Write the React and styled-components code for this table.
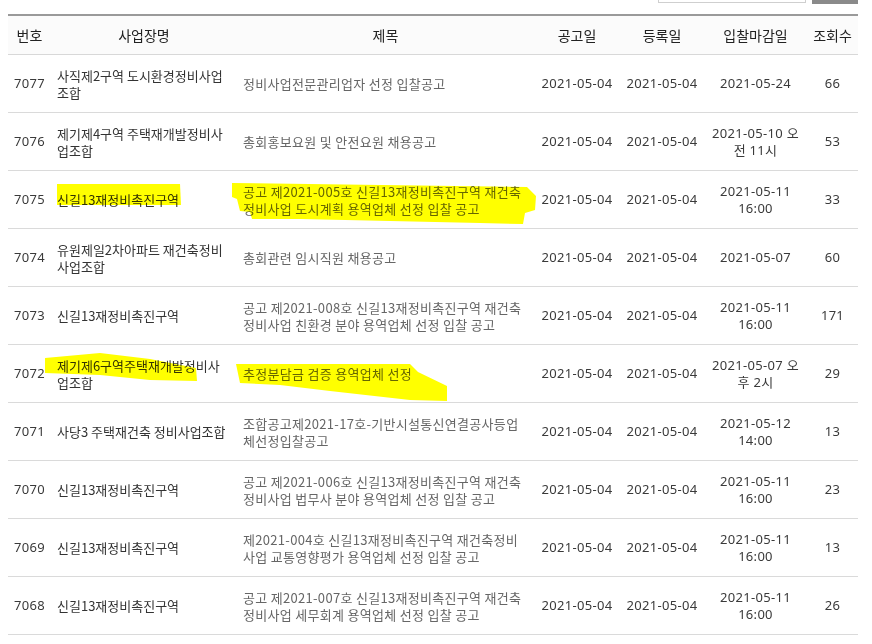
import React from 'react'
import styled, { createGlobalStyle } from 'styled-components'

const GlobalStyle = createGlobalStyle`
    body {
        margin: 0;
        background: #fff;
        font-family: "Noto Sans CJK KR", "Noto Sans", sans-serif;
    }
`

const COLS = '43px 186px 297px 86px 84px 103px 51px'

const notices = [
    { no: 7077, place: '사직제2구역 도시환경정비사업\n조합', title: '정비사업전문관리업자 선정 입찰공고', close: '2021-05-24', views: 66 },
    { no: 7076, place: '제기제4구역 주택재개발정비사\n업조합', title: '총회홍보요원 및 안전요원 채용공고', close: '2021-05-10 오\n전 11시', views: 53 },
    { no: 7075, place: '신길13재정비촉진구역', title: '공고 제2021-005호 신길13재정비촉진구역 재건축\n정비사업 도시계획 용역업체 선정 입찰 공고', close: '2021-05-11\n16:00', views: 33 },
    { no: 7074, place: '유원제일2차아파트 재건축정비\n사업조합', title: '총회관련 임시직원 채용공고', close: '2021-05-07', views: 60 },
    { no: 7073, place: '신길13재정비촉진구역', title: '공고 제2021-008호 신길13재정비촉진구역 재건축\n정비사업 친환경 분야 용역업체 선정 입찰 공고', close: '2021-05-11\n16:00', views: 171 },
    { no: 7072, place: '제기제6구역주택재개발정비사\n업조합', title: '추정분담금 검증 용역업체 선정', close: '2021-05-07 오\n후 2시', views: 29 },
    { no: 7071, place: '사당3 주택재건축 정비사업조합', title: '조합공고제2021-17호-기반시설통신연결공사등업\n체선정입찰공고', close: '2021-05-12\n14:00', views: 13 },
    { no: 7070, place: '신길13재정비촉진구역', title: '공고 제2021-006호 신길13재정비촉진구역 재건축\n정비사업 법무사 분야 용역업체 선정 입찰 공고', close: '2021-05-11\n16:00', views: 23 },
    { no: 7069, place: '신길13재정비촉진구역', title: '제2021-004호 신길13재정비촉진구역 재건축정비\n사업 교통영향평가 용역업체 선정 입찰 공고', close: '2021-05-11\n16:00', views: 13 },
    { no: 7068, place: '신길13재정비촉진구역', title: '공고 제2021-007호 신길13재정비촉진구역 재건축\n정비사업 세무회계 용역업체 선정 입찰 공고', close: '2021-05-11\n16:00', views: 26 },
]

// highlighter marks drawn over the list
const marks = [
    '57,184 180,184 181,205 57,205',
    '232,183 527,187 536,196 535,210 525,213 523,224 480,223 300,219 252,219 250,212 240,211 237,199 232,197',
    '45,358 100,353 150,359 196,368 197,381 150,380 100,375 45,373',
    '236,364 410,364 418,372 447,386 447,401 410,400 330,391 280,385 240,383',
]

function App() {
    return (
        <Screen>
            <GlobalStyle />
            <Page>
                <Toolbar>
                    <SearchInput />
                    <SearchButton />
                </Toolbar>
                <Board>
                    <HeadRow>
                        <HeadCell>번호</HeadCell>
                        <HeadCell>사업장명</HeadCell>
                        <HeadCell>제목</HeadCell>
                        <HeadCell>공고일</HeadCell>
                        <HeadCell>등록일</HeadCell>
                        <HeadCell>입찰마감일</HeadCell>
                        <HeadCell>조회수</HeadCell>
                    </HeadRow>
                    { notices.map(item => <Row key={item.no}>
                        <Cell $center $date>{item.no}</Cell>
                        <Cell $tone="#333">{item.place}</Cell>
                        <Cell $tone="#666" $spread>{item.title}</Cell>
                        <Cell $center $date>2021-05-04</Cell>
                        <Cell $center $date>2021-05-04</Cell>
                        <Cell $center $date>{item.close}</Cell>
                        <Cell $center $date>{item.views}</Cell>
                    </Row>) }
                </Board>
            </Page>
            <Marker width="872" height="644" viewBox="0 0 872 644">
                { marks.map(points => <polygon key={points} points={points} fill="#ffff00" />) }
            </Marker>
        </Screen>
    )
}

const Screen = styled.div`
    position: relative;
    width: 872px;
    height: 644px;
    overflow: hidden;
`
const Page = styled.div`
    width: 850px;
    margin-left: 8px;
`
const Toolbar = styled.div`
    height: 4px;
    display: flex;
    justify-content: flex-end;
    align-items: flex-end;
    gap: 6px;
    overflow: hidden;
`
const SearchInput = styled.div`
    width: 146px;
    height: 29px;
    margin-bottom: 1px;
    border: 1px solid #cfcfcf;
    background: #fff;
`
const SearchButton = styled.div`
    width: 46px;
    height: 30px;
    background: #8a8a8a;
`
const Board = styled.div`
    margin-top: 10px;
    border-top: 2px solid #9a9a9a;
`
const HeadRow = styled.div`
    display: grid;
    grid-template-columns: ${COLS};
    height: 38px;
    background: #fbfbfb;
    border-bottom: 1px solid #d8d8d8;
`
const HeadCell = styled.div`
    display: flex;
    align-items: center;
    justify-content: center;
    font-size: 14px;
    color: #222;
`
const Row = styled.div`
    display: grid;
    grid-template-columns: ${COLS};
    height: 57px;
    border-bottom: 1px solid #dadada;
`
const Cell = styled.div`
    display: flex;
    align-items: center;
    justify-content: ${p => p.$center ? 'center' : 'flex-start'};
    text-align: ${p => p.$center ? 'center' : 'left'};
    padding: ${p => p.$center ? '0' : '0 6px'};
    white-space: pre;
    line-height: 17px;
    font-size: 13px;
    letter-spacing: ${p => p.$date || p.$spread ? '0.3px' : '0'};
    font-family: ${p => p.$date ? '"Noto Sans", "Noto Sans CJK KR", sans-serif' : '"Noto Sans CJK KR", sans-serif'};
    color: ${p => p.$tone || '#3a3a3a'};
`
const Marker = styled.svg`
    position: absolute;
    top: 0;
    left: 0;
    pointer-events: none;
    mix-blend-mode: multiply;
`

export default App
